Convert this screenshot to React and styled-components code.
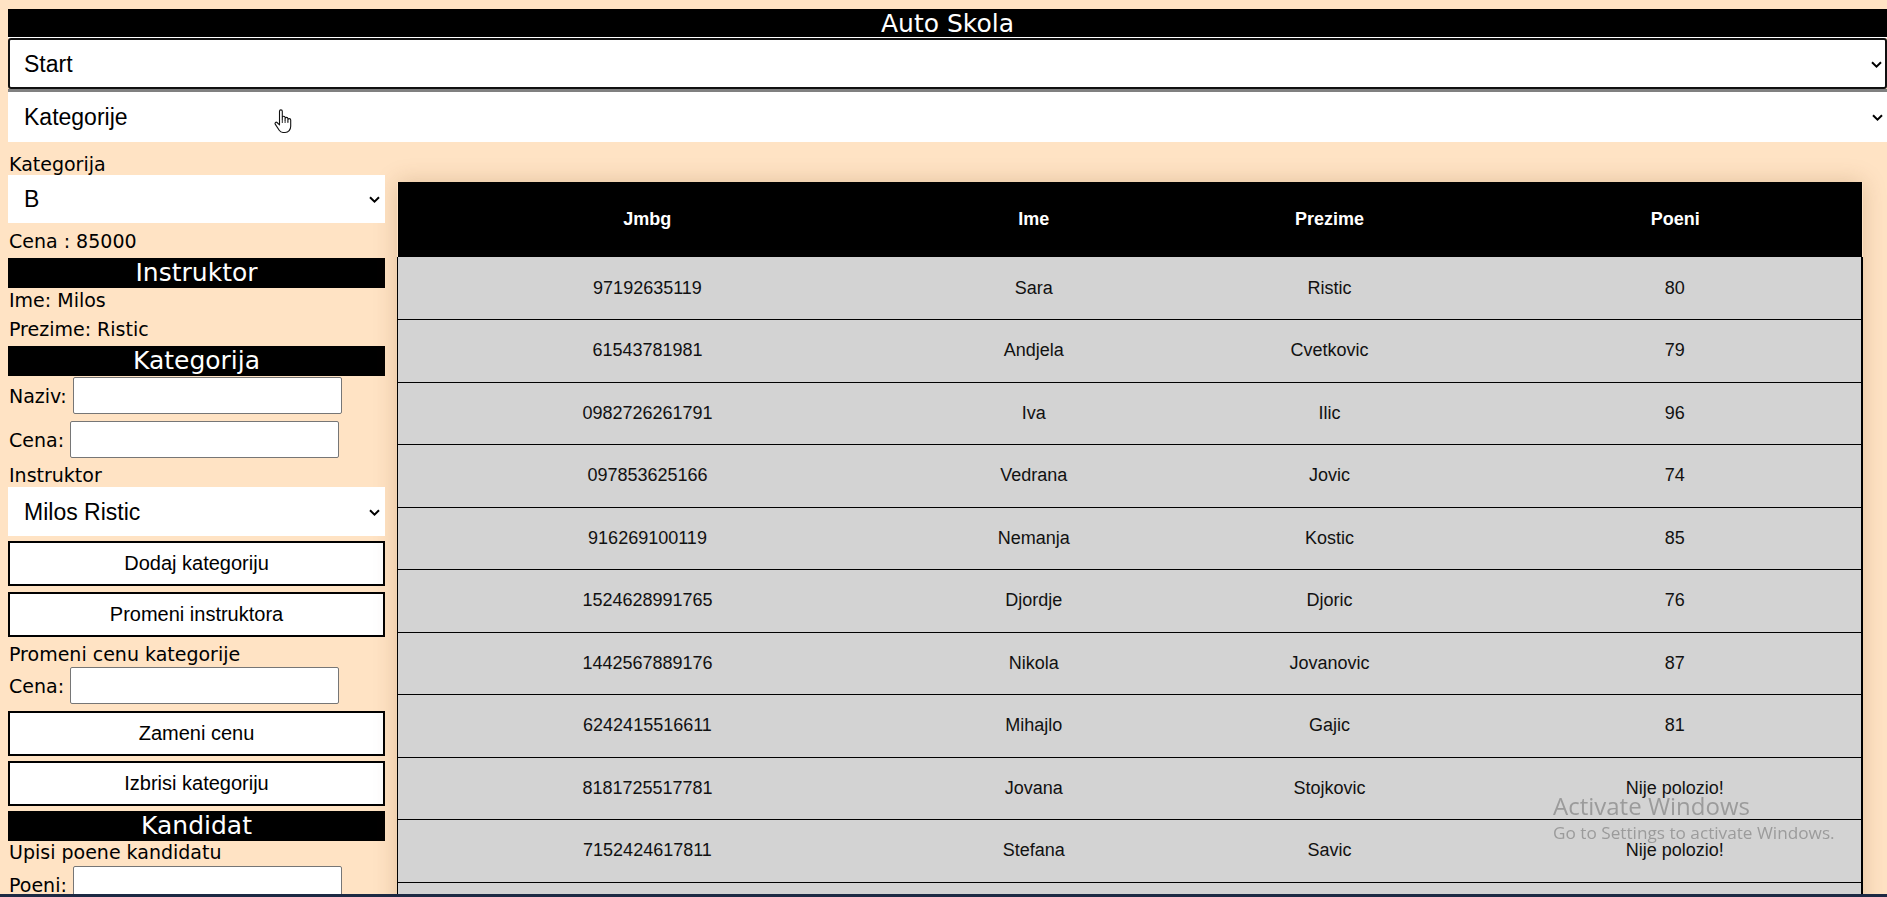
import React from 'react';
import styled, { createGlobalStyle } from 'styled-components';

const Global = createGlobalStyle`
  html, body { margin: 0; padding: 0; background: #ffe3c4; }
  body { font-family: "DejaVu Sans", Verdana, sans-serif; overflow: hidden; color: #000; }
  * { box-sizing: border-box; }
`;

const Page = styled.div`
  padding: 9px 0 0 8px;
  display: flex;
  flex-direction: column;
`;

const TitleBar = styled.h1`
  margin: 0;
  height: 29px;
  background: #000;
  color: #fff;
  font: 400 25px/30px "DejaVu Sans", Verdana, sans-serif;
  text-align: center;
  border-bottom: 1px solid #fff;
  overflow: hidden;
`;

const SelectWrap = styled.div`
  position: relative;
  height: ${p => p.$h}px;
  margin-top: ${p => p.$mt || 0}px;
  background: #fff;
  border: ${p => (p.$focus ? '2px solid #101010' : 'none')};
  border-radius: ${p => (p.$focus ? '3px' : '0')};
  border-top: ${p => (p.$topLine ? '3px solid #808080' : undefined)};
`;

const Select = styled.select`
  appearance: none;
  -webkit-appearance: none;
  width: 100%;
  height: 100%;
  border: none;
  outline: none;
  background: transparent;
  font: 23px "Liberation Sans", Arial, sans-serif;
  color: #000;
  padding: 0 0 0 ${p => p.$pl}px;
  margin: 0;
`;

const Chevron = styled.svg`
  position: absolute;
  right: ${p => p.$r}px;
  top: 50%;
  width: 11px;
  height: 7px;
  margin-top: -3px;
  pointer-events: none;
`;

const Dropdown = ({ value, options, h, mt, focus, topLine, pl = 16, r = 5 }) => (
  <SelectWrap $h={h} $mt={mt} $focus={focus} $topLine={topLine}>
    <Select $pl={pl} defaultValue={value}>
      {options.map(o => (
        <option key={o}>{o}</option>
      ))}
    </Select>
    <Chevron $r={r} viewBox="0 0 11 7">
      <path d="M1 1.2 L5.5 5.6 L10 1.2" fill="none" stroke="#000" strokeWidth="2" />
    </Chevron>
  </SelectWrap>
);

const Main = styled.div`
  display: flex;
  align-items: flex-start;
  gap: 12px;
`;

const Sidebar = styled.aside`
  width: 377px;
  flex: none;
  display: flex;
  flex-direction: column;
`;

const Text = styled.div`
  font-size: 19px;
  line-height: 22px;
  height: 22px;
  padding-left: 1px;
  margin-top: ${p => p.$mt || 0}px;
  white-space: nowrap;
`;

const SectionHeader = styled.h2`
  margin: ${p => p.$mt || 0}px 0 0 0;
  height: 30px;
  background: #000;
  color: #fff;
  font: 400 25px/30px "DejaVu Sans", Verdana, sans-serif;
  text-align: center;
`;

const FieldRow = styled.label`
  display: flex;
  align-items: center;
  gap: 6px;
  margin-top: ${p => p.$mt || 0}px;
  font-size: 19px;
  line-height: 22px;
  padding-left: 1px;
`;

const Input = styled.input`
  width: 269px;
  height: 37px;
  border: 1px solid #767676;
  border-radius: 2px;
  background: #fff;
  padding: 0 4px;
  font: 18px "Liberation Sans", Arial, sans-serif;
`;

const Button = styled.button`
  height: 45px;
  margin-top: ${p => p.$mt || 0}px;
  width: 100%;
  background: #fff;
  border: 2px solid #000;
  font: 20px "Liberation Sans", Arial, sans-serif;
  color: #000;
  padding: 0;
  cursor: pointer;
`;

const TableWrap = styled.div`
  flex: 1;
  margin: 40px 24px 0 0;
`;

const Table = styled.table`
  width: 100%;
  border-collapse: collapse;
  table-layout: fixed;
  box-shadow: 0 0 22px rgba(120, 70, 20, 0.22);
  font-family: "Liberation Sans", Arial, sans-serif;
  font-size: 18px;
`;

const Th = styled.th`
  background: #000;
  color: #fff;
  font-weight: 700;
  height: 75px;
  padding: 0;
  text-align: center;
`;

const Tr = styled.tr`
  background: #d3d3d3;
`;

const Td = styled.td`
  height: 62.5px;
  padding: 0;
  text-align: center;
  border-bottom: 1px solid #000;
  border-left: ${p => (p.$first ? '1px solid #000' : 'none')};
  border-right: ${p => (p.$last ? '2px solid #000' : 'none')};
  color: #111;
`;

const Watermark = styled.div`
  position: fixed;
  left: 1553px;
  top: 789px;
  color: rgba(110, 110, 110, 0.55);
  font-family: "Open Sans", "Noto Sans", sans-serif;
  pointer-events: none;
`;

const WmTitle = styled.div`
  font-size: 24px;
  line-height: 33px;
`;

const WmSub = styled.div`
  font-size: 17.2px;
  line-height: 22px;
`;

const TaskbarEdge = styled.div`
  position: fixed;
  left: 0;
  right: 0;
  bottom: 0;
  height: 3px;
  background: #1d2a44;
`;

const Cursor = styled.svg`
  position: fixed;
  left: 273px;
  top: 109px;
  width: 20px;
  height: 25px;
  pointer-events: none;
`;

const rows = [
  ['97192635119', 'Sara', 'Ristic', '80'],
  ['61543781981', 'Andjela', 'Cvetkovic', '79'],
  ['0982726261791', 'Iva', 'Ilic', '96'],
  ['097853625166', 'Vedrana', 'Jovic', '74'],
  ['916269100119', 'Nemanja', 'Kostic', '85'],
  ['1524628991765', 'Djordje', 'Djoric', '76'],
  ['1442567889176', 'Nikola', 'Jovanovic', '87'],
  ['6242415516611', 'Mihajlo', 'Gajic', '81'],
  ['8181725517781', 'Jovana', 'Stojkovic', 'Nije polozio!'],
  ['7152424617811', 'Stefana', 'Savic', 'Nije polozio!'],
  ['', '', '', ''],
];

const cols = [500, 274, 318, 374];

export default function App() {
  return (
    <>
      <Global />
      <Page>
        <TitleBar>Auto Skola</TitleBar>
        <Dropdown value="Start" options={['Start']} h={51} focus pl={14} r={3} />
        <Dropdown value="Kategorije" options={['Kategorije']} h={53} topLine pl={16} r={4} />
        <Main>
          <Sidebar>
            <Text $mt={11}>Kategorija</Text>
            <Dropdown value="B" options={['B']} h={48} pl={16} r={5} />
            <Text $mt={7}>Cena : 85000</Text>
            <SectionHeader $mt={6}>Instruktor</SectionHeader>
            <Text $mt={1}>Ime: Milos</Text>
            <Text $mt={7}>Prezime: Ristic</Text>
            <SectionHeader $mt={6}>Kategorija</SectionHeader>
            <FieldRow $mt={1}>
              Naziv: <Input type="text" />
            </FieldRow>
            <FieldRow $mt={7}>
              Cena: <Input type="text" />
            </FieldRow>
            <Text $mt={6}>Instruktor</Text>
            <Dropdown value="Milos Ristic" options={['Milos Ristic']} h={49} mt={1} pl={16} r={5} />
            <Button $mt={5}>Dodaj kategoriju</Button>
            <Button $mt={6}>Promeni instruktora</Button>
            <Text $mt={6}>Promeni cenu kategorije</Text>
            <FieldRow $mt={2}>
              Cena: <Input type="text" />
            </FieldRow>
            <Button $mt={7}>Zameni cenu</Button>
            <Button $mt={5}>Izbrisi kategoriju</Button>
            <SectionHeader $mt={5}>Kandidat</SectionHeader>
            <Text>Upisi poene kandidatu</Text>
            <FieldRow $mt={3}>
              Poeni: <Input type="text" />
            </FieldRow>
          </Sidebar>
          <TableWrap>
            <Table>
              <colgroup>
                {cols.map((c, i) => (
                  <col key={i} style={{ width: `${(c / 1466) * 100}%` }} />
                ))}
              </colgroup>
              <thead>
                <tr>
                  <Th>Jmbg</Th>
                  <Th>Ime</Th>
                  <Th>Prezime</Th>
                  <Th>Poeni</Th>
                </tr>
              </thead>
              <tbody>
                {rows.map((r, i) => (
                  <Tr key={i}>
                    {r.map((c, j) => (
                      <Td key={j} $first={j === 0} $last={j === 3}>
                        {c}
                      </Td>
                    ))}
                  </Tr>
                ))}
              </tbody>
            </Table>
          </TableWrap>
        </Main>
      </Page>
      <Watermark>
        <WmTitle>Activate Windows</WmTitle>
        <WmSub>Go to Settings to activate Windows.</WmSub>
      </Watermark>
      <Cursor viewBox="0 0 20 25">
        <path
          d="M6.5 2.3a1.4 1.4 0 0 1 2.8 0V10V8.6a1.4 1.4 0 0 1 2.8 0V11V9.8a1.4 1.4 0 0 1 2.8 0V12V11a1.4 1.4 0 0 1 2.8 0v6.2c0 3.4-2.2 6.3-5.6 6.3H10c-1.7 0-2.9-.8-3.8-2.2L2.2 15.1c-.7-1.1.7-2.5 1.8-1.6L6.5 15.8Z"
          fill="#fff"
          stroke="#111"
          strokeWidth="1.1"
          strokeLinejoin="round"
        />
        <path d="M9.3 10v4M12.1 11v3M14.9 12v2" stroke="#111" strokeWidth="0.9" fill="none" />
      </Cursor>
      <TaskbarEdge />
    </>
  );
}
